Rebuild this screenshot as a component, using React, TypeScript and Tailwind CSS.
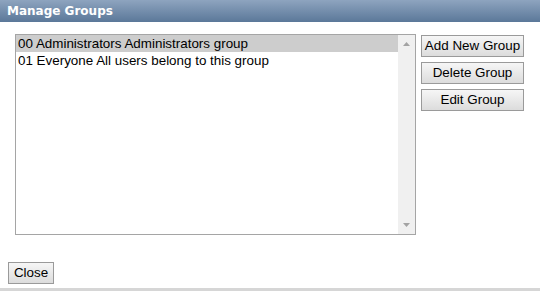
const groups = [
  "00 Administrators Administrators group",
  "01 Everyone All users belong to this group",
];

function Btn({ label, w }: { label: string; w: string }) {
  return (
    <button
      className={`${w} h-[22px] border border-[#9a9a9a] bg-gradient-to-b from-[#f6f6f6] to-[#dcdcdc] text-[13.4px] leading-none text-black`}
    >
      {label}
    </button>
  );
}

export default function App() {
  return (
    <div className="w-[540px] h-[291px] bg-white flex flex-col font-['Liberation_Sans',Arial,sans-serif] overflow-hidden">
      {/* Title bar */}
      <div className="h-[22px] bg-gradient-to-b from-[#8ea4bf] to-[#5b7899] flex items-center px-[7px]">
        <span className="text-white font-bold text-[12px] font-['DejaVu_Sans',Verdana,sans-serif]">
          Manage Groups
        </span>
      </div>

      <div className="flex flex-1 pt-[12px] pl-[15px]">
        {/* Group list */}
        <div className="w-[401px] h-[201px] border border-[#a5a5a5] flex">
          <ul className="flex-1 text-[13.4px] leading-[17px] text-black">
            {groups.map((g, i) => (
              <li key={g} className={`pl-[2px] ${i === 0 ? "bg-[#cdcdcd]" : ""}`}>
                {g}
              </li>
            ))}
          </ul>
          <div className="w-[17px] bg-[#f0f0f0] flex flex-col items-center justify-between py-[7px]">
            <svg width="7" height="4" viewBox="0 0 7 4">
              <path d="M0 4 L3.5 0 L7 4 Z" fill="#a3a3a3" />
            </svg>
            <svg width="7" height="4" viewBox="0 0 7 4">
              <path d="M0 0 L3.5 4 L7 0 Z" fill="#a3a3a3" />
            </svg>
          </div>
        </div>

        {/* Actions */}
        <div className="flex flex-col gap-[5px] ml-[5px] pt-[1px]">
          <Btn label="Add New Group" w="w-[103px]" />
          <Btn label="Delete Group" w="w-[103px]" />
          <Btn label="Edit Group" w="w-[103px]" />
        </div>
      </div>

      <div className="px-[8px] pb-[4px]">
        <Btn label="Close" w="w-[46px]" />
      </div>
      <div className="h-[3px] bg-[#d6d6d6]" />
    </div>
  );
}
